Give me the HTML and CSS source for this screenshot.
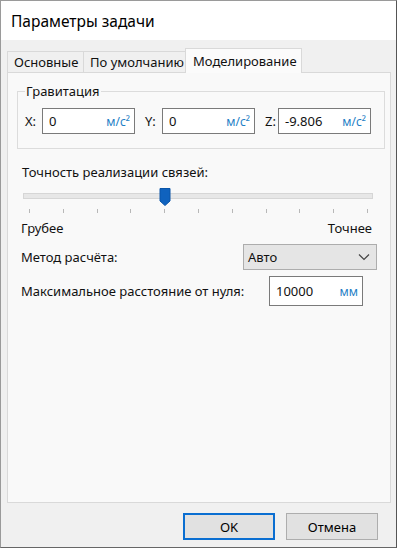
FILE: index.html
```
<!DOCTYPE html>
<html lang="ru">
<head>
    <meta charset="UTF-8">
    <title>Параметры задачи</title>
    <link rel="stylesheet" href="styles.css">
</head>
<body>
<div class="window">
    <div class="titlebar">Параметры задачи</div>

    <div class="body">
        <div class="tabs">
            <div class="tab">Основные</div>
            <div class="tab">По умолчанию</div>
            <div class="tab active">Моделирование</div>
        </div>

        <div class="panel">
            <fieldset class="group">
                <legend>Гравитация</legend>
                <div class="vec">
                    <span class="axis">X:</span>
                    <div class="field"><span>0</span><span class="unit">м/с²</span></div>
                    <span class="axis">Y:</span>
                    <div class="field"><span>0</span><span class="unit">м/с²</span></div>
                    <span class="axis narrow">Z:</span>
                    <div class="field"><span>-9.806</span><span class="unit">м/с²</span></div>
                </div>
            </fieldset>

            <div class="caption">Точность реализации связей:</div>
            <div class="slider">
                <div class="track"></div>
                <div class="ticks">
                    <i></i><i></i><i></i><i></i><i></i><i></i><i></i><i></i><i></i><i></i><i></i>
                    <svg class="thumb" style="left: 40%" width="12" height="18" viewBox="0 0 12 18">
                        <path d="M1 0.5 H11 V13 L6 17.5 L1 13 Z" fill="#0f62be" stroke="#0a55a8" stroke-width="1"/>
                    </svg>
                </div>
            </div>
            <div class="ends">
                <span>Грубее</span>
                <span>Точнее</span>
            </div>

            <div class="row">
                <span>Метод расчёта:</span>
                <div class="combo">
                    <span>Авто</span>
                    <svg width="12" height="8" viewBox="0 0 12 8">
                        <path d="M1 1.5 L6 6.5 L11 1.5" fill="none" stroke="#444" stroke-width="1.2"/>
                    </svg>
                </div>
            </div>

            <div class="row">
                <span>Максимальное расстояние от нуля:</span>
                <div class="field dist"><span>10000</span><span class="unit">мм</span></div>
            </div>
        </div>

        <div class="footer">
            <button class="btn primary">OK</button>
            <button class="btn">Отмена</button>
        </div>
    </div>
</div>
</body>
</html>
```

FILE: styles.css
```
* { box-sizing: border-box; }
body { margin: 0; background: #fff; font-family: "Noto Sans", "Open Sans", sans-serif; font-size: 13px; color: #111; }

.window { width: 397px; height: 548px; border: 1px solid #9a9a9a; border-right-color: #555; border-bottom-color: #666; display: flex; flex-direction: column; background: #f0f0f0; }
.titlebar { height: 39px; flex: none; background: #fff; padding-left: 10px; font-size: 15.5px; display: flex; align-items: center; color: #000; }

.body { flex: 1; display: flex; flex-direction: column; padding: 8px 5px 0 6px; }

.tabs { display: flex; align-items: flex-end; height: 24px; flex: none; }
.tab { height: 21px; border: 1px solid #d9d9d9; border-bottom: none; border-right: none; display: flex; align-items: center; padding: 0 0 0 6px; background: #f0f0f0; white-space: nowrap; }
.tab:nth-child(1) { width: 76px; }
.tab:nth-child(2) { width: 102px; }
.tab.active { width: 117px; height: 25px; margin-bottom: -1px; padding-left: 7px; border-right: 1px solid #d9d9d9; background: #fbfbfb; position: relative; z-index: 1; }

.panel { height: 431px; flex: none; border: 1px solid #d9d9d9; background: #f9f9f9; padding: 9px 5px 0 9px; }

.group { margin: 0; border: 1px solid #dcdcdc; padding: 8px 7px 14px 7px; min-width: 0; width: 368px; }
.group legend { padding: 0 1px; }
.vec { display: flex; align-items: center; }
.vec > * { flex: none; }
.axis { width: 17px; }
.axis.narrow { width: 13px; }
.field { width: 93px; height: 26px; background: #fff; border: 1px solid #7a7a7a; display: flex; align-items: center; justify-content: space-between; padding: 0 4px 0 6px; }
.vec .field { margin-right: 10px; }
.vec .field:last-child { margin-right: 0; }
.unit { color: #1f7fc6; font-size: 12px; }

.caption { margin: 14px 0 0 5px; }

.slider { margin: 12px 0 0 6px; width: 350px; }
.track { height: 6px; border: 1px solid #d6d6d6; background: #e7e7e7; }
.ticks { position: relative; margin: 10px 5px 0 6px; height: 4px; display: flex; justify-content: space-between; }
.ticks i { width: 1px; height: 4px; background: #b8b8b8; }
.thumb { position: absolute; top: -21px; transform: translateX(-50%); }

.ends { display: flex; justify-content: space-between; margin: 6px 13px 0 4px; }

.row { display: flex; align-items: center; justify-content: space-between; padding: 0 8px 0 4px; }
.ends + .row { margin-top: 7px; }
.combo { width: 134px; height: 26px; background: #e5e5e5; border: 1px solid #adadad; display: flex; align-items: center; justify-content: space-between; padding: 0 6px 0 4px; }
.row + .row { margin-top: 6px; }
.field.dist { width: 94px; height: 30px; margin-right: 14px; margin-left: auto; }

.footer { display: flex; justify-content: flex-end; gap: 11px; padding: 10px 13px 0 0; }
.btn { width: 92px; height: 27px; background: #e1e1e1; border: 1px solid #adadad; font: inherit; color: #000; padding: 0; }
.btn.primary { border: 2px solid #0a6ed1; }
```
